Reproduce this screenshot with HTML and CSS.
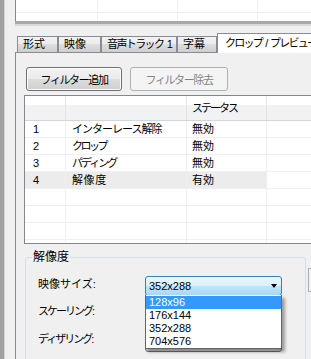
FILE: index.html
```html
<!DOCTYPE html>
<html lang="ja">
<head>
  <meta charset="UTF-8">
  <title>クロップ / プレビュー</title>
  <link rel="stylesheet" href="styles.css">
</head>
<body>
  <div class="side-strip"></div>
  <div class="main">
    <div class="top-list">
      <div class="top-row"><span></span><span></span><span></span><span></span></div>
      <div class="top-row"><span></span><span></span><span></span><span></span></div>
    </div>
    <div class="pane-split"></div>

    <div class="tabs">
      <div class="tab tab-format">形式</div>
      <div class="tab tab-video">映像</div>
      <div class="tab tab-audio">音声トラック 1</div>
      <div class="tab tab-subs">字幕</div>
      <div class="tab active">クロップ / プレビュー</div>
    </div>

    <div class="panel">
      <div class="buttons">
        <button class="btn btn-add">フィルター追加</button>
        <button class="btn btn-remove" disabled>フィルター除去</button>
      </div>

      <div class="filter-list">
        <div class="row header">
          <div></div><div></div><div class="ls-2">ステータス</div><div></div>
        </div>
        <div class="row">
          <div>1</div><div class="ls-1">インターレース解除</div><div>無効</div><div></div>
        </div>
        <div class="row">
          <div>2</div><div class="ls-3">クロップ</div><div>無効</div><div></div>
        </div>
        <div class="row">
          <div>3</div><div class="ls-2">パディング</div><div>無効</div><div></div>
        </div>
        <div class="row selected">
          <div>4</div><div class="ls-wide">解像度</div><div>有効</div><div></div>
        </div>
        <div class="row"><div></div><div></div><div></div><div></div></div>
        <div class="row"><div></div><div></div><div></div><div></div></div>
        <div class="row"><div></div><div></div><div></div><div></div></div>
        <div class="row"><div></div><div></div><div></div><div></div></div>
      </div>

      <div class="lower">
        <fieldset class="group">
          <legend>解像度</legend>
          <div class="field">
            <span class="field-label">映像サイズ:</span>
            <div class="combo open">
              <span class="combo-text">352x288</span>
              <span class="arrow"></span>
              <ul class="dropdown">
                <li class="hl">128x96</li>
                <li>176x144</li>
                <li>352x288</li>
                <li>704x576</li>
              </ul>
            </div>
          </div>
          <div class="field">
            <span class="field-label ls-2">スケーリング:</span>
            <div class="combo">
              <span class="combo-text"></span>
              <span class="arrow"></span>
            </div>
          </div>
          <div class="field">
            <span class="field-label ls-2">ディザリング:</span>
            <div class="combo">
              <span class="combo-text"></span>
              <span class="arrow"></span>
            </div>
          </div>
        </fieldset>
        <div class="side-box"></div>
      </div>
    </div>
  </div>
</body>
</html>
```

FILE: styles.css
```css
body {
  margin: 0;
  width: 311px;
  height: 359px;
  overflow: hidden;
  display: flex;
  background: #f0f0f0;
  color: #000;
  font-family: 'Liberation Sans', 'Noto Sans CJK JP', sans-serif;
  font-size: 11px;
}
.side-strip {
  flex: none;
  width: 4px;
  background: #a0a0a0;
  border-right: 1px solid #d4d4d4;
  margin-right: 10px;
}
.main {
  flex: 1;
  min-width: 0;
  display: flex;
  flex-direction: column;
}

.ls-1 { letter-spacing: -1px; }
.ls-2 { letter-spacing: -2px; }
.ls-3 { letter-spacing: -2.5px; }
.ls-wide { letter-spacing: 0.6px; }

/* list above the tabs, only its bottom edge shows */
.top-list {
  flex: none;
  width: 320px;
  height: 21px;
  box-sizing: border-box;
  background: #fff;
  border-left: 1px solid #828790;
}
.top-row {
  display: grid;
  grid-template-columns: 82px 80px 80px 1fr;
  height: 13px;
  box-sizing: border-box;
  border-bottom: 1px solid #f0f0f0;
}
.top-row + .top-row {
  height: 8px;
  border-bottom: none;
}
.top-row span {
  border-right: 1px solid #f0f0f0;
}
.pane-split {
  flex: none;
  width: 320px;
  height: 5px;
  background: linear-gradient(#a8a8a8 0 3px, #d8d8d8 3px 5px);
}

/* tabs */
.tabs {
  flex: none;
  display: flex;
  align-items: flex-end;
  height: 19px;
  margin-top: 7px;
  padding-left: 2px;
}
.tab {
  flex: none;
  box-sizing: border-box;
  height: 16px;
  padding-left: 5px;
  line-height: 15px;
  border: 1px solid #898c95;
  border-bottom: none;
  background: linear-gradient(#f2f2f2, #ebebeb 50%, #dddddd 50%, #cfcfcf);
  white-space: nowrap;
}
.tab-format { width: 41px; }
.tab-video { width: 43px; }
.tab-audio {
  width: 76px;
  letter-spacing: -1.6px;
  word-spacing: 2px;
}
.tab-subs { width: 40px; }
.tab.active {
  position: relative;
  z-index: 1;
  width: 110px;
  height: 20px;
  margin-bottom: -1px;
  padding-left: 7px;
  line-height: 18px;
  letter-spacing: -1.75px;
  word-spacing: 2px;
  background: #fff;
}

.panel {
  flex: 1 0 auto;
  width: 320px;
  box-sizing: border-box;
  border: 1px solid #898c95;
  background: #f0f0f0;
}

/* buttons */
.buttons {
  display: flex;
  gap: 8px;
  margin: 14px 0 0 10px;
}
.btn {
  height: 24px;
  padding: 0;
  font: inherit;
  letter-spacing: -1.4px;
  color: #000;
  border: 1px solid #707070;
  border-radius: 3px;
  background: linear-gradient(#f2f2f2, #ebebeb 50%, #dddddd 50%, #cfcfcf);
  box-shadow: inset 0 0 0 1px #fcfcfc;
}
.btn-add { width: 96px; }
.btn-remove {
  width: 98px;
  color: #838383;
  border-color: #adb2b5;
  background: #f4f4f4;
  box-shadow: none;
}

/* filter list */
.filter-list {
  width: 300px;
  height: 149px;
  box-sizing: border-box;
  margin: 4px 0 0 8px;
  border: 1px solid #828790;
  background: #fff;
  overflow: hidden;
}
.row {
  display: grid;
  grid-template-columns: 41px 121px 80px 1fr;
  height: 17px;
  box-sizing: border-box;
  border-bottom: 1px solid #f0f0f0;
  line-height: 16px;
}
.row div {
  border-right: 1px solid #f0f0f0;
  white-space: nowrap;
}
.row div:nth-child(1) { padding-left: 8px; }
.row div:nth-child(2) { padding-left: 6px; }
.row div:nth-child(3) { padding-left: 5px; }
.row.header {
  height: 25px;
  line-height: 24px;
  border-bottom-color: #d5d5d5;
  background: linear-gradient(#fff 0 9px, #f1f2f4 9px);
}
.row.header div {
  border-right-color: #e3e4e6;
}
.row.selected div:not(:last-child) {
  background: #ececec;
}

/* resolution group */
.lower {
  display: flex;
  align-items: flex-start;
  margin: 6px 0 0 9px;
}
.group {
  flex: none;
  width: 281px;
  min-width: 0;
  box-sizing: border-box;
  margin: 0;
  padding: 12px 0 20px;
  border: 1px solid #d5dfe5;
  border-radius: 3px;
  display: flex;
  flex-direction: column;
  gap: 7px;
}
.group legend {
  margin-left: 6px;
  padding: 0 1px;
  font-size: 12px;
  line-height: 14px;
}
.field {
  display: flex;
  align-items: flex-start;
}
.field-label {
  width: 107px;
  padding-left: 12px;
  line-height: 16px;
}
.combo {
  position: relative;
  display: flex;
  align-items: center;
  justify-content: space-between;
  width: 137px;
  height: 21px;
  box-sizing: border-box;
  padding: 0 4px 0 3px;
  border: 1px solid #707070;
  border-radius: 3px;
  background: linear-gradient(#f2f2f2, #ebebeb 50%, #dddddd 50%, #cfcfcf);
}
.combo.open {
  height: 20px;
  border-color: #3c7fb1;
  background: linear-gradient(#eaf6fd, #d9f0fc 50%, #bee6fd 50%, #a7d9f5);
}
.arrow {
  width: 0;
  height: 0;
  border-top: 4px solid #000;
  border-left: 3.5px solid transparent;
  border-right: 3.5px solid transparent;
}
.dropdown {
  position: absolute;
  top: 100%;
  left: -1px;
  z-index: 2;
  width: 137px;
  box-sizing: border-box;
  margin: 0;
  padding: 1px 0 0;
  list-style: none;
  background: #fff;
  border: 1px solid #646464;
  border-top: none;
  box-shadow: 3px 3px 3px rgba(0, 0, 0, 0.35);
}
.dropdown li {
  height: 13px;
  padding-left: 3px;
  line-height: 13px;
}
.dropdown li.hl {
  background: #3399ff;
  color: #fff;
}
.side-box {
  flex: none;
  width: 30px;
  height: 22px;
  margin: 18px 0 0 2px;
  border: 1px solid #adadad;
  background: #f4f4f4;
}
```
